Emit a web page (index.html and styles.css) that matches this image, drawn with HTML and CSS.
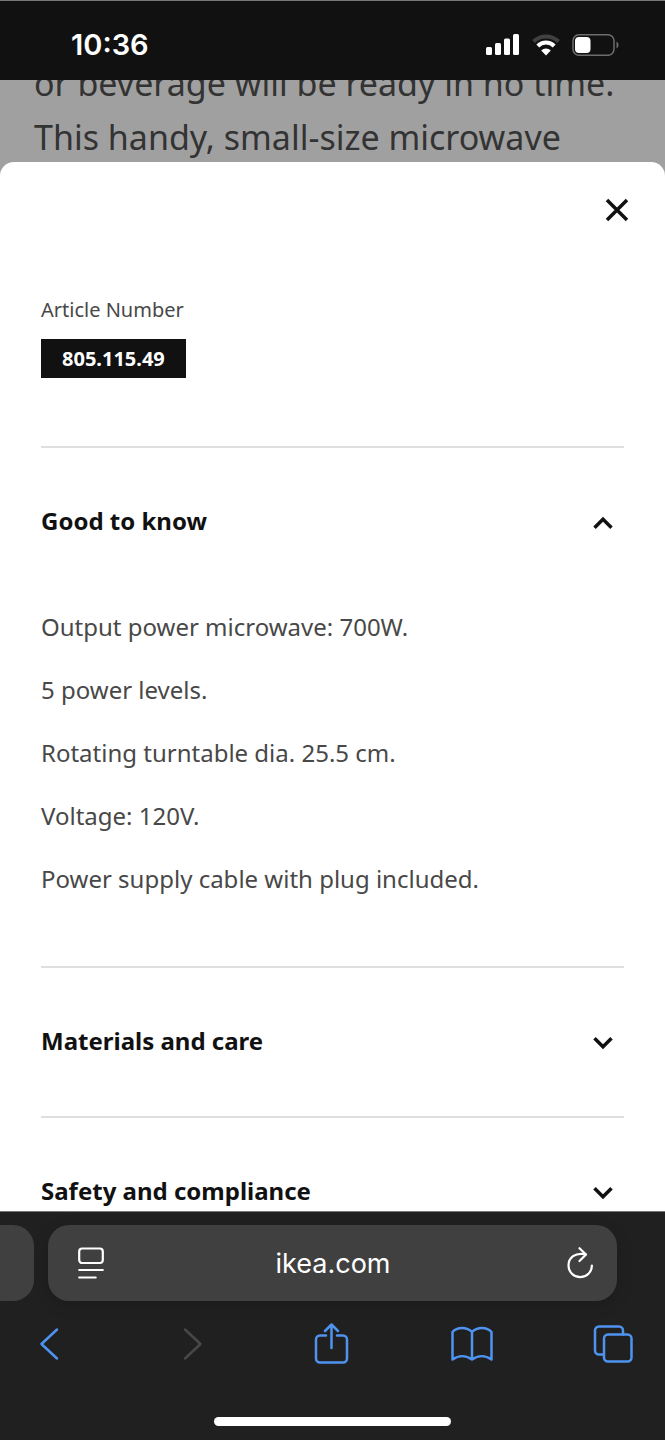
FILE: index.html
```html
<!DOCTYPE html>
<html lang="en">
  <head>
    <meta charset="utf-8">
    <meta name="viewport" content="width=device-width, initial-scale=1">
    <title>Product details</title>
    <link rel="stylesheet" href="styles.css">
  </head>
  <body>
    <header class="status-bar">
      <span class="time">10:36</span>
      <div class="status-icons">
        <svg width="34" height="22" viewBox="0 0 34 22" fill="#fff">
          <rect x="0" y="13" width="6" height="8" rx="1.5" />
          <rect x="9" y="9" width="6" height="12" rx="1.5" />
          <rect x="18" y="4.500" width="6" height="16.500" rx="1.5" />
          <rect x="27" y="0" width="6" height="21" rx="1.5" />
        </svg>
        <svg width="28" height="22" viewBox="0 0 28 22" fill="none">
          <path d="M1.500 7.500a18 18 0 0 1 25 0" stroke="#414141" stroke-width="4" />
          <path d="M5.800 12a11.500 11.500 0 0 1 16.400 0" stroke="#fff" stroke-width="4" />
          <path d="M9.200 16.600a6.800 6.800 0 0 1 9.600 0L14 21.500z" fill="#fff" />
        </svg>
        <svg width="47" height="22" viewBox="0 0 47 22" fill="none">
          <rect x="1" y="0.800" width="41" height="20.500" rx="6" stroke="#6d6d6d" stroke-width="1.500" />
          <rect x="3" y="3" width="15.500" height="16" rx="4" fill="#fff" />
          <path d="M44.500 7.500c2.700 1.500 2.700 5.500 0 7z" fill="#6d6d6d" />
        </svg>
      </div>
    </header>

    <main class="page">
      <div class="backdrop">
        <p>or beverage will be ready in no time. This handy, small-size microwave</p>
      </div>

      <section class="sheet">
        <div class="sheet-header">
          <button class="close" aria-label="Close">
            <svg width="24" height="24" viewBox="0 0 24 24" fill="none" stroke="#111" stroke-width="3.500">
              <path d="M2 2l20 20M22 2L2 22" />
            </svg>
          </button>
        </div>

        <div class="article">
          <span class="article-label">Article Number</span>
          <span class="article-number">805.115.49</span>
        </div>

        <div class="accordion">
          <button class="accordion-title" aria-expanded="true">
            Good to know
            <svg width="20" height="14" viewBox="0 0 20 14" fill="none" stroke="#111" stroke-width="3.500">
              <path d="M1.500 11.800L10 3.300l8.500 8.500" />
            </svg>
          </button>
          <div class="accordion-panel">
            <p>Output power microwave: 700W.</p>
            <p>5 power levels.</p>
            <p>Rotating turntable dia. 25.5 cm.</p>
            <p>Voltage: 120V.</p>
            <p>Power supply cable with plug included.</p>
          </div>
        </div>
        <div class="accordion">
          <button class="accordion-title" aria-expanded="false">
            Materials and care
            <svg width="20" height="14" viewBox="0 0 20 14" fill="none" stroke="#111" stroke-width="3.500">
              <path d="M1.500 2.200l8.500 8.500 8.500-8.500" />
            </svg>
          </button>
        </div>
        <div class="accordion">
          <button class="accordion-title" aria-expanded="false">
            Safety and compliance
            <svg width="20" height="14" viewBox="0 0 20 14" fill="none" stroke="#111" stroke-width="3.500">
              <path d="M1.500 2.200l8.500 8.500 8.500-8.500" />
            </svg>
          </button>
        </div>
      </section>
    </main>

    <footer class="browser-bar">
      <div class="tabs">
        <div class="previous-tab"></div>
        <div class="address">
          <button aria-label="Page settings">
            <svg width="26" height="32" viewBox="0 0 26 32" fill="none" stroke="#fff" stroke-width="2.200" stroke-linecap="round">
              <rect x="1.200" y="1.500" width="23.600" height="14.500" rx="3" />
              <path d="M1.200 23h23.600M1.200 30.500h16.500" />
            </svg>
          </button>
          <span class="domain">ikea.com</span>
          <button aria-label="Reload">
            <svg width="26" height="32" viewBox="0 0 26 32" fill="none" stroke="#fff" stroke-width="2.200" stroke-linecap="round" stroke-linejoin="round">
              <path d="M18.500 7.300C8 5 1.500 11 1.500 18.500a11.700 11.700 0 0 0 23.400 0" />
              <path d="M12.500 1.200l6.500 6.300-6.500 6.500" />
            </svg>
          </button>
        </div>
      </div>

      <nav class="toolbar">
        <button aria-label="Back">
          <svg width="40" height="42" viewBox="0 0 40 42">
            <path d="M28 6.500L12.500 21 28 35.500" />
          </svg>
        </button>
        <button class="inactive" aria-label="Forward">
          <svg width="40" height="42" viewBox="0 0 40 42">
            <path d="M16 6.500L31.500 21 16 35.500" />
          </svg>
        </button>
        <button aria-label="Share">
          <svg width="40" height="42" viewBox="0 0 40 42">
            <path d="M17 12.500h-6a4 4 0 0 0-4 4v19a4 4 0 0 0 4 4h23a4 4 0 0 0 4-4v-19a4 4 0 0 0-4-4h-6" />
            <path d="M22.500 25V1.500M16 8l6.500-6.500L29 8" />
          </svg>
        </button>
        <button aria-label="Bookmarks">
          <svg width="44" height="42" viewBox="0 0 44 42">
            <path d="M23 9C18 3.500 8 3.500 3.500 9v27.500c6-4.500 13.500-4.500 19.500 0 6-4.500 13.500-4.500 19.500 0V9C38 3.500 28 3.500 23 9zM23 9v27.500" />
          </svg>
        </button>
        <button aria-label="Tabs">
          <svg width="40" height="42" viewBox="0 0 40 42">
            <rect x="11" y="11.500" width="27.500" height="27" rx="4" />
            <path d="M10.500 31.500h-4.500a4 4 0 0 1-4-4v-20a4 4 0 0 1 4-4h20a4 4 0 0 1 4 4v4" />
          </svg>
        </button>
      </nav>
      <div class="home-indicator"></div>
    </footer>
  </body>
</html>
```
FILE: styles.css
```css
* {
  box-sizing: border-box;
}

body {
  margin: 0;
  height: 100vh;
  display: flex;
  flex-direction: column;
  overflow: hidden;
  font-family: "Noto Sans", sans-serif;
  color: #484848;
}

p {
  margin: 0;
}

button {
  padding: 0;
  border: none;
  background: none;
  font-family: inherit;
  cursor: pointer;
}

svg {
  display: block;
}

.status-bar {
  flex: none;
  height: 80px;
  padding: 8px 46px 0 71px;
  display: flex;
  justify-content: space-between;
  align-items: center;
  background-color: #111;
  border-top: 1px solid #777;
}

.time {
  font-family: Inter, sans-serif;
  font-size: 29px;
  line-height: 36px;
  font-weight: 600;
  color: #fff;
}

.status-icons {
  display: flex;
  gap: 12px;
}

.page {
  flex: 1;
  min-height: 0;
  overflow: hidden;
  background-color: #a0a0a0;
}

.backdrop {
  height: 84px;
  padding: 0 34px;
  display: flex;
  flex-direction: column;
  justify-content: flex-end;
  font-size: 34px;
  line-height: 54px;
  color: #333;
}

.sheet {
  margin-top: -2px;
  padding: 0 41px;
  background-color: #fff;
  border-radius: 14px 14px 0 0;
}

.sheet-header {
  height: 96px;
  margin-right: -5px;
  display: flex;
  justify-content: flex-end;
  align-items: center;
}

.article {
  padding: 37px 0 68px;
  display: flex;
  flex-direction: column;
  align-items: flex-start;
  gap: 14px;
  font-size: 20px;
  line-height: 30px;
}

.article-number {
  padding: 5px 21px 4px;
  background-color: #111;
  color: #fff;
  font-weight: 700;
}

.accordion {
  border-top: 2px solid #dfdfdf;
}

.accordion-title {
  width: 100%;
  height: 148px;
  padding: 0 11px 4px 0;
  display: flex;
  justify-content: space-between;
  align-items: center;
  font-size: 24px;
  font-weight: 700;
  color: #111;
}

.accordion-title svg {
  margin-top: 6px;
}

.accordion-panel {
  padding: 13px 0 69px;
  display: flex;
  flex-direction: column;
  gap: 27px;
  font-size: 24px;
  line-height: 36px;
}

.browser-bar {
  flex: none;
  padding: 13px 0 14px;
  background-color: #202020;
  border-top: 1px solid #777;
}

.tabs {
  display: flex;
  gap: 14px;
  padding-right: 48px;
}

.previous-tab {
  width: 34px;
  background-color: #404040;
  border-radius: 0 21px 21px 0;
}

.address {
  flex: 1;
  height: 76px;
  padding: 0 24px 0 30px;
  display: flex;
  justify-content: space-between;
  align-items: center;
  background-color: #404040;
  border-radius: 21px;
  box-shadow: 0 4px 16px rgba(0, 0, 0, 0.15);
}

.domain {
  margin-right: 5px;
  font-family: Inter, sans-serif;
  font-size: 27px;
  color: #fff;
}

.toolbar {
  padding: 22px 32px 0 29px;
  display: flex;
  justify-content: space-between;
}

.toolbar svg {
  fill: none;
  stroke: #4f93f0;
  stroke-width: 2.5px;
  stroke-linecap: round;
  stroke-linejoin: round;
}

.toolbar .inactive svg {
  stroke: #484848;
}

.home-indicator {
  width: 237px;
  height: 9px;
  margin: 52px auto 0;
  background-color: #fff;
  border-radius: 5px;
}
```
